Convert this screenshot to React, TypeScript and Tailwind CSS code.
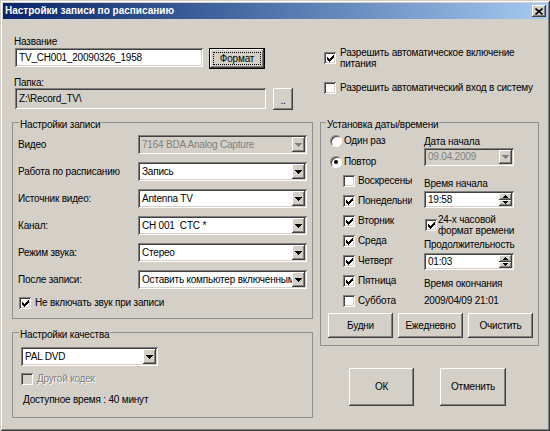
import React from "react";

const sunken =
  "shadow-[inset_1px_1px_0_#808080,inset_-1px_-1px_0_#ffffff,inset_2px_2px_0_#404040,inset_-2px_-2px_0_#d4d0c8]";
const raised =
  "shadow-[inset_-1px_-1px_0_#404040,inset_1px_1px_0_#ffffff,inset_-2px_-2px_0_#808080,inset_2px_2px_0_#d4d0c8]";

function Arrow({ up = false, small = false, gray = false }: { up?: boolean; small?: boolean; gray?: boolean }) {
  const w = small ? 5 : 7;
  const h = small ? 3 : 4;
  const d = up ? `M0 ${h}H${w}L${w / 2} 0Z` : `M0 0H${w}L${w / 2} ${h}Z`;
  return (
    <svg width={w} height={h} viewBox={`0 0 ${w} ${h}`} className="block" shapeRendering="crispEdges">
      <path d={d} fill={gray ? "#808080" : "#000"} />
    </svg>
  );
}

function Combo({ value, className, disabled }: { value: string; className: string; disabled?: boolean }) {
  return (
    <div className={`flex p-[2px] ${sunken} ${disabled ? "bg-[#d4d0c8] text-[#808080]" : "bg-white"} ${className}`}>
      <div className="flex-1 min-w-0 overflow-hidden whitespace-pre pl-[2px] flex items-center">{value}</div>
      <div className={`w-[13px] shrink-0 flex items-center justify-center bg-[#d4d0c8] ${raised}`}>
        <Arrow gray={disabled} />
      </div>
    </div>
  );
}

function Spin({ value, className }: { value: string; className: string }) {
  return (
    <div className={`flex p-[2px] bg-white ${sunken} ${className}`}>
      <div className="flex-1 pl-[2px] flex items-center">{value}</div>
      <div className="w-[13px] shrink-0 flex flex-col">
        <div className={`flex-1 flex items-center justify-center bg-[#d4d0c8] ${raised}`}>
          <Arrow up small />
        </div>
        <div className={`flex-1 flex items-center justify-center bg-[#d4d0c8] ${raised}`}>
          <Arrow small />
        </div>
      </div>
    </div>
  );
}

// classic 7x7 check mark, 3px tall per column
const CHECK = [2, 3, 4, 3, 2, 1, 0].map((y, x) => `M${x} ${y}h1v3h-1z`).join("");

function Check({ checked, disabled }: { checked?: boolean; disabled?: boolean }) {
  return (
    <span className={`w-[12px] h-[12px] shrink-0 flex items-center justify-center ${sunken} ${disabled ? "bg-[#d4d0c8]" : "bg-white"}`}>
      {checked && (
        <svg width="7" height="7" viewBox="0 0 7 7" className="block" shapeRendering="crispEdges">
          <path d={CHECK} fill="#000" />
        </svg>
      )}
    </span>
  );
}

function Radio({ checked }: { checked?: boolean }) {
  return (
    <span className="w-[12px] h-[12px] shrink-0 rounded-full bg-white border border-[#808080] border-r-white border-b-white shadow-[inset_1px_1px_0_#404040] flex items-center justify-center">
      {checked && <span className="w-[4px] h-[4px] rounded-full bg-black" />}
    </span>
  );
}

function Btn({ children, className = "" }: { children?: React.ReactNode; className?: string }) {
  return <div className={`flex items-center justify-center bg-[#d4d0c8] ${raised} ${className}`}>{children}</div>;
}

const rows: [string, string, boolean][] = [
  ["Видео", "7164 BDA Analog Capture", true],
  ["Работа по расписанию", "Запись", false],
  ["Источник видео:", "Antenna TV", false],
  ["Канал:", "CH 001  CTC *", false],
  ["Режим звука:", "Стерео", false],
  ["После записи:", "Оставить компьютер включенным", false],
];

const days: [string, boolean][] = [
  ["Воскресенье", false],
  ["Понедельник", true],
  ["Вторник", true],
  ["Среда", true],
  ["Четверг", true],
  ["Пятница", true],
  ["Суббота", false],
];

export default function App() {
  return (
    <div className="w-[550px] h-[431px] overflow-hidden bg-[#d4d0c8] p-[3px] text-[10px] leading-[12px] tracking-[-0.2px] text-black font-['Liberation_Sans',Arial,sans-serif] shadow-[inset_1px_1px_0_#d4d0c8,inset_-1px_-1px_0_#404040,inset_2px_2px_0_#ffffff,inset_-2px_-2px_0_#808080]">
      {/* title bar */}
      <div className="h-[16px] flex items-center justify-between bg-linear-to-r from-[#0a246a] to-[#a6caf0] pl-[2px] pr-[1px]">
        <span className="text-white font-bold text-[10px] tracking-normal whitespace-nowrap">Настройки записи по расписанию</span>
        <Btn className="w-[14px] h-[12px]">
          <svg width="8" height="7" viewBox="0 0 8 7" className="block">
            <path d="M0.5 0.5L7.5 6.5M7.5 0.5L0.5 6.5" stroke="#000" strokeWidth="1.6" />
          </svg>
        </Btn>
      </div>

      <div className="grid grid-cols-[301px_221px] gap-x-[7px] pl-[9px]">
        {/* left column */}
        <div className="flex flex-col">
          <div className="mt-[17px] ml-[2px]">Название</div>
          <div className="flex items-start ml-[3px]">
            <div className={`w-[188px] h-[19px] bg-white ${sunken} flex items-center pl-[4px]`}>TV_CH001_20090326_1958</div>
            <div className="ml-[6px] w-[56px] h-[21px] border border-black flex">
              <div className={`flex-1 flex p-[3px] bg-[#d4d0c8] ${raised}`}>
                <span className="flex-1 border border-dotted border-black flex items-center justify-center">Формат</span>
              </div>
            </div>
          </div>
          <div className="mt-[8px] ml-[2px] leading-[11px]">Папка:</div>
          <div className="flex items-start ml-[3px]">
            <div className={`w-[251px] h-[21px] bg-[#d4d0c8] ${sunken} flex items-center pl-[4px]`}>Z:\Record_TV\</div>
            <Btn className="ml-[7px] w-[20px] h-[22px] pt-[4px]">..</Btn>
          </div>

          <fieldset className="mt-[3px] h-[206px] border border-[#909090]">
            <legend className="ml-[6px] px-[1px] pt-[6px] leading-[12px]">Настройки записи</legend>
            <div className="pt-[4px] pl-[5px]">
              <div className="grid grid-cols-[120px_169px] gap-y-[8px] items-center">
                {rows.map(([label, value, disabled]) => (
                  <React.Fragment key={label}>
                    <div className="whitespace-nowrap">{label}</div>
                    <Combo value={value} disabled={disabled} className="h-[19px]" />
                  </React.Fragment>
                ))}
              </div>
              <div className="mt-[8px] ml-[1px] flex items-center gap-[4px]">
                <Check checked />
                <span>Не включать звук при записи</span>
              </div>
            </div>
          </fieldset>

          <fieldset className="mt-[4px] h-[95px] border border-[#909090]">
            <legend className="ml-[6px] px-[1px] pt-[6px] leading-[12px]">Настройки качества</legend>
            <div className="pt-[6px] pl-[8px]">
              <Combo value="PAL DVD" className="w-[137px] h-[19px]" />
              <div className="mt-[7px] flex items-center gap-[4px]">
                <Check disabled />
                <span className="text-[#808080] [text-shadow:1px_1px_0_#ffffff]">Другой кодек</span>
              </div>
              <div className="mt-[9px] ml-[2px]">Доступное время : 40 минут</div>
            </div>
          </fieldset>
        </div>

        {/* right column */}
        <div className="flex flex-col">
          <div className="mt-[28px] ml-[4px] flex items-center gap-[4px] leading-[11px]">
            <Check checked />
            <span>
              Разрешить автоматическое включение
              <br />
              питания
            </span>
          </div>
          <div className="mt-[13px] ml-[4px] h-[12px] flex items-center gap-[4px]">
            <Check />
            <span className="whitespace-nowrap">Разрешить автоматический вход в систему</span>
          </div>

          <fieldset className="mt-[19px] w-[219px] h-[233px] border border-[#909090]">
            <legend className="ml-[5px] px-[1px] pt-[6px] leading-[12px]">Установка даты/времени</legend>
            <div className="flex pl-[9px] pt-[4px]">
              <div className="w-[85px] flex flex-col">
                <div className="h-[12px] flex items-center gap-[2px]">
                  <Radio />
                  <span>Один раз</span>
                </div>
                <div className="mt-[9px] h-[12px] flex items-center gap-[2px]">
                  <Radio checked />
                  <span>Повтор</span>
                </div>
                <div className="mt-[7px] ml-[13px] flex flex-col gap-[8px]">
                  {days.map(([d, c]) => (
                    <div key={d} className="h-[12px] flex items-center gap-[3px]">
                      <Check checked={c} />
                      <span className="w-[54px] overflow-hidden whitespace-nowrap">{d}</span>
                    </div>
                  ))}
                </div>
              </div>
              <div className="ml-[9px] w-[90px] flex flex-col">
                <div className="mt-[1px]">Дата начала</div>
                <Combo value="09.04.2009" disabled className="h-[18px]" />
                <div className="mt-[12px]">Время начала</div>
                <Spin value="19:58" className="mt-[1px] h-[17px]" />
                <div className="mt-[6px] ml-[1px] flex items-center gap-[1px] leading-[11px] whitespace-nowrap">
                  <Check checked />
                  <span>
                    24-х часовой
                    <br />
                    формат времени
                  </span>
                </div>
                <div className="mt-[3px]">Продолжительность</div>
                <Spin value="01:03" className="mt-[2px] h-[17px]" />
                <div className="mt-[8px]">Время окончания</div>
                <div className="mt-[5px]">2009/04/09 21:01</div>
              </div>
            </div>
            <div className="mt-[6px] pl-[7px] flex gap-[5px]">
              <Btn className="w-[65px] h-[25px]">Будни</Btn>
              <Btn className="w-[65px] h-[25px]">Ежедневно</Btn>
              <Btn className="w-[65px] h-[25px]">Очистить</Btn>
            </div>
          </fieldset>

          <div className="mt-[22px] ml-[29px] flex gap-[26px]">
            <Btn className="w-[65px] h-[38px]">ОК</Btn>
            <Btn className="w-[66px] h-[38px]">Отменить</Btn>
          </div>
        </div>
      </div>
    </div>
  );
}
